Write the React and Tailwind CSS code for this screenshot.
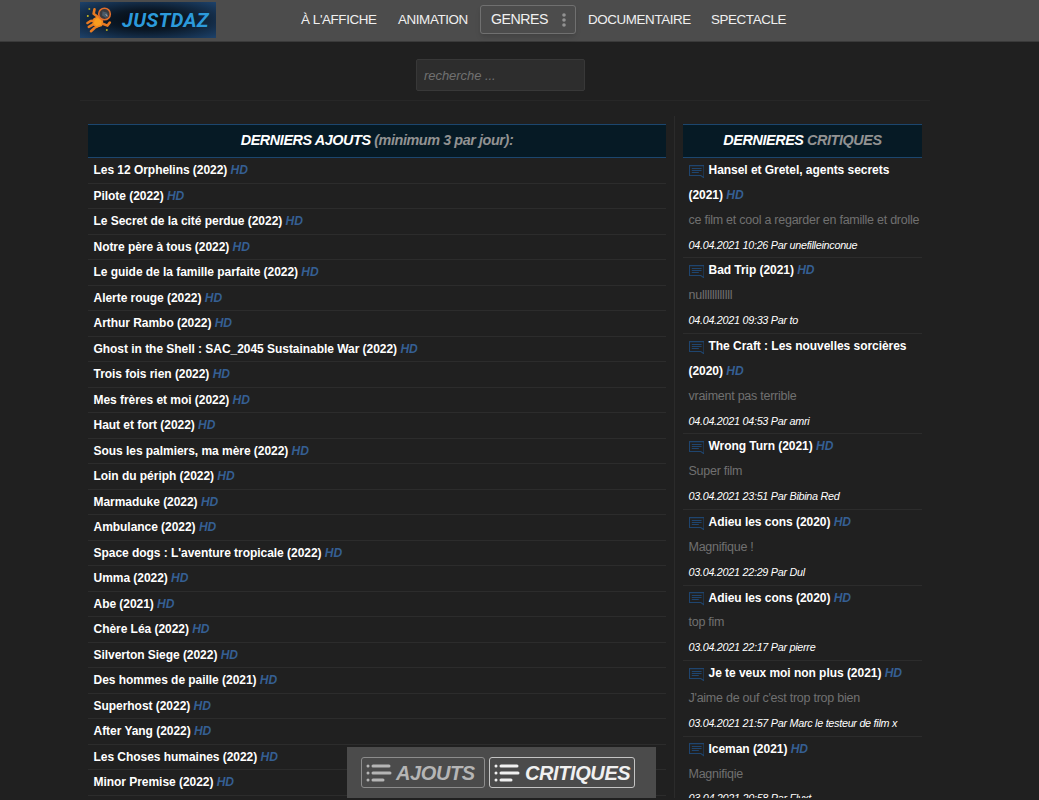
import { useState } from 'react';

const additions = [
  'Les 12 Orphelins (2022)',
  'Pilote (2022)',
  'Le Secret de la cité perdue (2022)',
  'Notre père à tous (2022)',
  'Le guide de la famille parfaite (2022)',
  'Alerte rouge (2022)',
  'Arthur Rambo (2022)',
  'Ghost in the Shell : SAC_2045 Sustainable War (2022)',
  'Trois fois rien (2022)',
  'Mes frères et moi (2022)',
  'Haut et fort (2022)',
  'Sous les palmiers, ma mère (2022)',
  'Loin du périph (2022)',
  'Marmaduke (2022)',
  'Ambulance (2022)',
  "Space dogs : L'aventure tropicale (2022)",
  'Umma (2022)',
  'Abe (2021)',
  'Chère Léa (2022)',
  'Silverton Siege (2022)',
  'Des hommes de paille (2021)',
  'Superhost (2022)',
  'After Yang (2022)',
  'Les Choses humaines (2022)',
  'Minor Premise (2022)',
];

const reviews = [
  { title: 'Hansel et Gretel, agents secrets (2021)', text: 'ce film et cool a regarder en famille et drolle', meta: '04.04.2021 10:26 Par unefilleinconue' },
  { title: 'Bad Trip (2021)', text: 'nullllllllllll', meta: '04.04.2021 09:33 Par to' },
  { title: 'The Craft : Les nouvelles sorcières (2020)', text: 'vraiment pas terrible', meta: '04.04.2021 04:53 Par amri' },
  { title: 'Wrong Turn (2021)', text: 'Super film', meta: '03.04.2021 23:51 Par Bibina Red' },
  { title: 'Adieu les cons (2020)', text: 'Magnifique !', meta: '03.04.2021 22:29 Par Dul' },
  { title: 'Adieu les cons (2020)', text: 'top fim', meta: '03.04.2021 22:17 Par pierre' },
  { title: 'Je te veux moi non plus (2021)', text: "J'aime de ouf c'est trop trop bien", meta: '03.04.2021 21:57 Par Marc le testeur de film x' },
  { title: 'Iceman (2021)', text: 'Magnifiqie', meta: '03.04.2021 20:58 Par Flyxt' },
];

const Logo = () => (
  <a href="#" className="flex h-[36px] w-[136px] items-center bg-[radial-gradient(ellipse_at_center,#05090d_0%,#0a1725_40%,#1d426b_100%)] pl-[6px]">
    <svg width="28" height="28" viewBox="0 0 28 28" fill="none">
      <g stroke="#e67a22" strokeWidth="2.6" strokeLinecap="round" strokeLinejoin="round">
        <path d="M8.5 3.2 7.6 7.8 12 11" />
        <path d="M23.8 16.5 21.5 19.6 16 17.5" />
        <path d="M1.5 17 4.5 15 9 14.5" />
        <path d="M5 25.2 8.5 22 12.5 19.5" />
        <path d="M2.8 20.8 7 18.5" />
      </g>
      <path d="m8 13 4-2 4.5 4-1 4.5-5 1.5L7 18z" fill="#f99d1e" stroke="#ee8620" strokeWidth="1.5" strokeLinejoin="round" />
      <circle cx="18.5" cy="8" r="5.8" fill="#3c3a3e" stroke="#e06d2b" strokeWidth="1.6" />
      <path d="m16.5 5.2 4.8 1.5.6 4.2-2.2.8-3.6-2.2z" fill="#4c5b69" />
      <path d="m19.8 8.2 1.5 2" stroke="#aab4bc" />
      <circle cx="3.3" cy="3" r="1" fill="#a79a1e" />
      <circle cx="1.8" cy="10" r="1" fill="#c9bd20" />
      <circle cx="20.8" cy="24" r="1" fill="#b5a91e" />
    </svg>
    <span className="ml-[8px] font-[Roboto] text-[20px] font-bold italic leading-none tracking-[0.3px] text-[#2c9adb]">JUSTDAZ</span>
  </a>
);

const CommentIcon = () => (
  <svg className="mr-[4.5px] inline-block align-[-4px]" width="15.5" height="13.5" viewBox="0 0 15.5 13.5" fill="none" stroke="#1f456f" strokeWidth="1.1">
    <path d="M.5.6H15v12.2l-3.2-2.3H.5z" />
    <path d="M2.8 3.5h9.8M2.8 5.5h9.8M2.8 7.5h7" />
  </svg>
);

const ListIcon = () => (
  <svg className="shrink-0" width="26" height="20" viewBox="0 0 26 20" stroke="currentColor" strokeWidth="3" strokeLinecap="round">
    <path d="M2 3h.01M2 10h.01M2 17h.01M7 3h16M7 10h17M7 17h10" />
  </svg>
);

const Hd = () => <span className="font-bold italic text-[#355f93]">HD</span>;

const App = () => {
  const [search, setSearch] = useState('');

  return (
    <div className="relative h-[800px] w-full overflow-hidden bg-[#202020] font-['Liberation_Sans',Arial,sans-serif]">
      <header className="flex h-[42px] border-b border-[#3a3a3a] bg-[#4c4c4c] pl-[80px] pt-[2px]">
        <Logo />
        <nav className="flex items-start pt-[3px] text-[13.4px] leading-[29px] tracking-[-0.4px] whitespace-nowrap text-[#f0f0f0]">
          <a href="#" className="ml-[85px] w-[97px]">À L'AFFICHE</a>
          <a href="#" className="w-[82px]">ANIMATION</a>
          <a href="#" className="flex h-[29px] w-[96px] items-center rounded-[3px] border border-[#707070] pl-[10px] text-[14.2px] leading-[27px] tracking-[-0.5px] shadow-md">
            GENRES
            <svg className="ml-[14px]" width="4" height="14" viewBox="0 0 4 14" fill="#929292">
              <circle cx="2" cy="2" r="1.8" />
              <circle cx="2" cy="7" r="1.8" />
              <circle cx="2" cy="12" r="1.8" />
            </svg>
          </a>
          <a href="#" className="ml-[12px] w-[123px]">DOCUMENTAIRE</a>
          <a href="#">SPECTACLE</a>
        </nav>
      </header>

      <div className="ml-[80px] flex h-[59px] w-[850px] justify-center border-b border-[#272727] pt-[17px] pr-[9px]">
        <input
          className="h-[32px] w-[169px] rounded-[2px] border border-[#383838] bg-[#2d2d2d] px-[7px] text-[13px] italic tracking-[-0.05px] text-[#aaa] placeholder:text-[#717171]"
          placeholder="recherche ..."
          value={search}
          onChange={(e) => setSearch(e.target.value)}
        />
      </div>

      <main className="ml-[88px] flex h-[697px] w-[834px] overflow-hidden pt-[15px]">
        <section className="w-[587px] shrink-0 border-r border-[#2b2b2b] pt-[8px] pr-[8px]">
          <h2 className="h-[34px] border-y border-[#1c466e] bg-[#061a25] text-center text-[14.4px] leading-[31px] font-bold tracking-[-0.42px] italic text-white">
            DERNIERS AJOUTS <span className="text-[#929292]">(minimum 3 par jour):</span>
          </h2>
          <ul>
            {additions.map((title) => (
              <li key={title} className="h-[25.5px] border-b border-[#2c2c2c] pl-[5.5px] text-[12px] leading-[24.9px] font-bold tracking-[-0.04px] text-white">
                <a href="#">{title}</a> <Hd />
              </li>
            ))}
          </ul>
        </section>

        <aside className="flex-1 pt-[8px] pl-[8px]">
          <h2 className="h-[34px] border-y border-[#1c466e] bg-[#061a25] text-center text-[14.4px] leading-[31px] font-bold tracking-[-0.42px] italic text-white">
            DERNIERES <span className="text-[#929292]">CRITIQUES</span>
          </h2>
          <ul>
            {reviews.map((review, i) => (
              <li key={i} className="border-b border-[#2c2c2c] pl-[5.5px] text-[12px] leading-[24.86px]">
                <h3 className="font-bold tracking-[-0.04px] text-white">
                  <CommentIcon />
                  <a href="#">{review.title}</a> <Hd />
                </h3>
                <p className="text-[12.5px] tracking-[-0.25px] whitespace-nowrap text-[#707070]">{review.text}</p>
                <p className="text-[10.8px] leading-[24.86px] tracking-[-0.28px] whitespace-nowrap italic text-white">{review.meta}</p>
              </li>
            ))}
          </ul>
        </aside>
      </main>

      {/* Floating shortcuts */}
      <div className="absolute top-[747px] left-[347px] flex h-[51px] w-[309px] gap-[4px] bg-[#4b4b4b] pt-[10px] pl-[14px] text-[20px] leading-none font-bold tracking-[-0.4px] italic">
        <button className="flex h-[31px] w-[124px] items-center gap-[4px] rounded-[3px] border border-[#8d8d8d] pl-[4px] text-[#b5b5b5]">
          <ListIcon />
          AJOUTS
        </button>
        <button className="flex h-[31px] w-[146px] items-center gap-[5px] rounded-[3px] border border-[#c4c4c4] pl-[4px] text-[#f0f0f0]">
          <ListIcon />
          CRITIQUES
        </button>
      </div>
    </div>
  );
};

export default App;
